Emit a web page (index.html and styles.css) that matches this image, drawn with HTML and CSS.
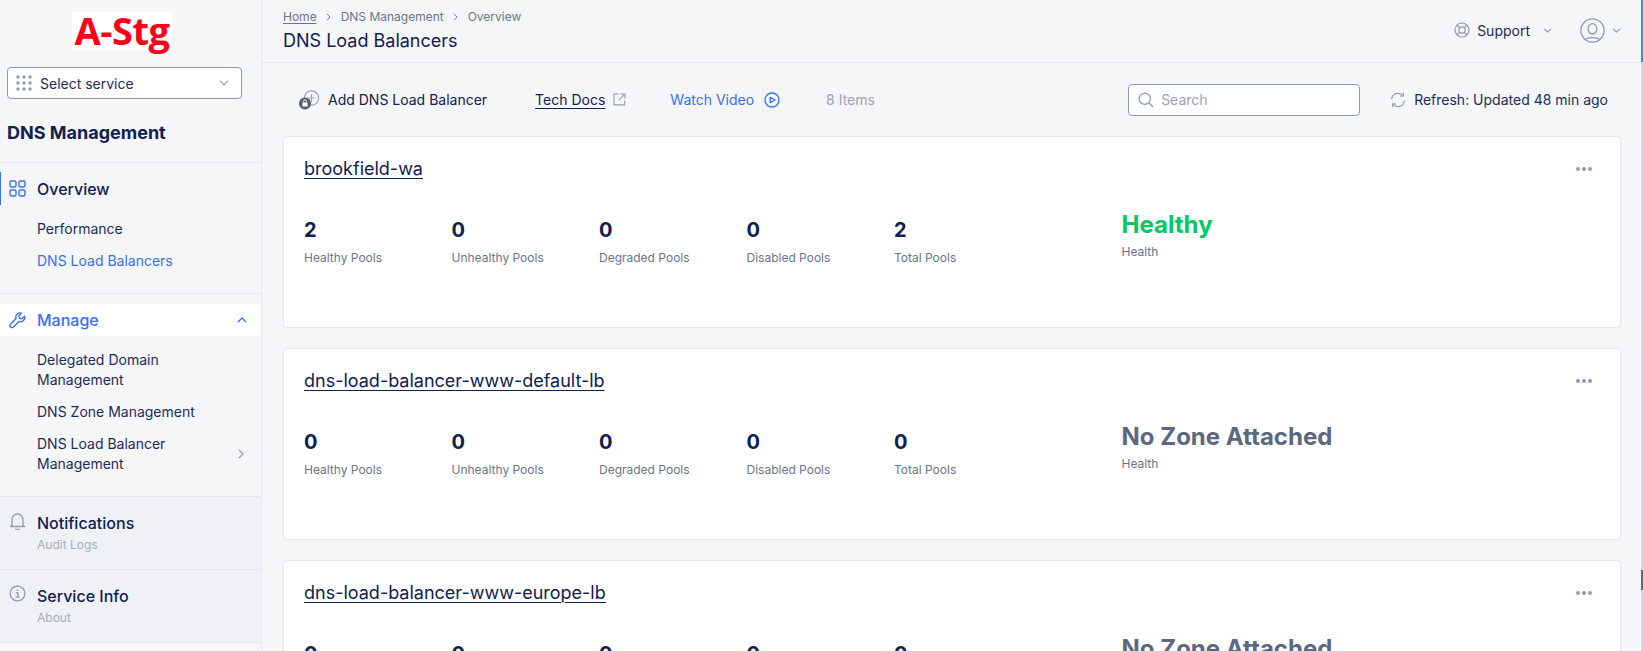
FILE: index.html
```html
<!DOCTYPE html>
<html lang="en">
<head>
<meta charset="utf-8">
<title>DNS Load Balancers</title>
<link rel="stylesheet" href="styles.css">
</head>
<body>
<aside class="sidebar">
  <div class="logo-row"><span class="logo">A-Stg</span></div>
  <div class="select">
    <svg class="select-grip" width="16" height="16" viewBox="0 0 16 16" fill="#8e99b2"><circle cx="2" cy="2" r="1.7"/><circle cx="8" cy="2" r="1.7"/><circle cx="14" cy="2" r="1.7"/><circle cx="2" cy="8" r="1.7"/><circle cx="8" cy="8" r="1.7"/><circle cx="14" cy="8" r="1.7"/><circle cx="2" cy="14" r="1.7"/><circle cx="8" cy="14" r="1.7"/><circle cx="14" cy="14" r="1.7"/></svg>
    <span class="select-text">Select service</span>
    <svg width="10" height="6" viewBox="0 0 10 6" fill="none" stroke="#8e99b2" stroke-width="1.2"><path d="M1 1l4 4 4-4"/></svg>
  </div>
  <div class="app-title">DNS Management</div>

  <nav class="group group-overview">
    <div class="nav-head active-bar">
      <svg width="17" height="17" viewBox="0 0 17 17" fill="none" stroke="#3a6ff0" stroke-width="1.4"><rect x="1" y="1" width="6" height="6" rx="1.4"/><rect x="10" y="1" width="6" height="6" rx="1.4"/><rect x="1" y="10" width="6" height="6" rx="1.4"/><rect x="10" y="10" width="6" height="6" rx="1.4"/></svg>
      <span class="nav-title">Overview</span>
    </div>
    <a class="sub">Performance</a>
    <a class="sub sub-active">DNS Load Balancers</a>
  </nav>

  <nav class="group group-manage">
    <div class="nav-head nav-open">
      <svg width="17" height="17" viewBox="0 0 17 17" fill="none" stroke="#3a6ff0" stroke-width="1.4" stroke-linejoin="round"><path d="M15.6 4.2l-2.8 2.6-2.4-.5-.6-2.4L12.5 1.2a4.2 4.2 0 0 0-5.4 5.4L1.5 12.2a1.9 1.9 0 0 0 2.9 2.9l5.7-5.7a4.2 4.2 0 0 0 5.5-5.2z"/></svg>
      <span class="nav-title nav-title-blue">Manage</span>
      <svg class="nav-chevron" width="10" height="6" viewBox="0 0 10 6" fill="none" stroke="#3a6ff0" stroke-width="1.3"><path d="M1 5l4-4 4 4"/></svg>
    </div>
    <a class="sub sub-wrap">Delegated Domain<br>Management</a>
    <a class="sub sub-wrap">DNS Zone Management</a>
    <a class="sub sub-wrap sub-more"><span>DNS Load Balancer<br>Management</span>
      <svg width="6" height="10" viewBox="0 0 6 10" fill="none" stroke="#8e99b2" stroke-width="1.2"><path d="M1 1l4 4-4 4"/></svg></a>
  </nav>

  <div class="footer-item">
    <svg width="17" height="18" viewBox="0 0 17 18" fill="none" stroke="#8e99b2" stroke-width="1.3"><path d="M3 13V7.5a5.5 5.5 0 0 1 11 0V13l1.5 1.5h-14z" stroke-linejoin="round"/><path d="M6.5 16.5a2.2 2.2 0 0 0 4 0"/></svg>
    <div><div class="footer-title">Notifications</div><div class="footer-sub">Audit Logs</div></div>
  </div>
  <div class="footer-item">
    <svg width="17" height="17" viewBox="0 0 17 17" fill="none" stroke="#8e99b2" stroke-width="1.3"><circle cx="8.5" cy="8.5" r="7.4"/><path d="M6.8 7.6h2v4.4M6.6 12.2h4.2"/><path d="M8.4 4.6v1.4" stroke-width="1.6"/></svg>
    <div><div class="footer-title">Service Info</div><div class="footer-sub">About</div></div>
  </div>
</aside>

<main class="main">
  <header class="topbar">
    <div class="top-left">
      <div class="crumbs"><a class="crumb-home">Home</a><svg width="5" height="8" viewBox="0 0 5 8" fill="none" stroke="#7a8499" stroke-width="1"><path d="M1 .8L4 4 1 7.2"/></svg><span>DNS Management</span><svg width="5" height="8" viewBox="0 0 5 8" fill="none" stroke="#7a8499" stroke-width="1"><path d="M1 .8L4 4 1 7.2"/></svg><span>Overview</span></div>
      <h1 class="page-title">DNS Load Balancers</h1>
    </div>
    <div class="top-right">
      <svg width="16" height="16" viewBox="0 0 16 16" fill="none" stroke="#8e99b2" stroke-width="1.2"><circle cx="8" cy="8" r="7"/><circle cx="8" cy="8" r="3.2"/><path d="M3 3l2.8 2.8M13 3l-2.8 2.8M3 13l2.8-2.8M13 13l-2.8-2.8"/></svg>
      <span class="support">Support</span>
      <svg class="support-chev" width="9" height="5" viewBox="0 0 9 5" fill="none" stroke="#8e99b2" stroke-width="1.1"><path d="M.8.8L4.5 4 8.2.8"/></svg>
      <svg class="avatar" width="25" height="25" viewBox="0 0 25 25" fill="none" stroke="#8e99b2" stroke-width="1.3"><circle cx="12.5" cy="12.5" r="11.6"/><ellipse cx="12.5" cy="10.8" rx="4.4" ry="5.2"/><path d="M5.5 21.5c2-2.4 12-2.4 14 0"/></svg>
      <svg class="avatar-chev" width="9" height="5" viewBox="0 0 9 5" fill="none" stroke="#8e99b2" stroke-width="1.1"><path d="M.8.8L4.5 4 8.2.8"/></svg>
    </div>
  </header>

  <div class="toolbar">
    <div class="tool tool-add">
      <span class="add-icon">
        <svg width="21" height="20" viewBox="0 0 21 20" fill="none"><circle cx="12.5" cy="8" r="7.2" stroke="#9aa3b5" stroke-width="1.2"/><path d="M12.5 4v8M8.5 8h8" stroke="#9aa3b5" stroke-width="1.2"/><circle cx="6" cy="13.5" r="6" fill="#565f6e"/><rect x="3.4" y="12.4" width="5.2" height="4.2" rx=".6" fill="#fff"/><path d="M4.6 12.4v-1.2a1.4 1.4 0 0 1 2.8 0v1.2" stroke="#fff" stroke-width=".9"/></svg>
      </span>
      <span>Add DNS Load Balancer</span>
    </div>
    <div class="tool tool-docs">
      <a class="docs-link">Tech Docs</a>
      <svg width="13" height="13" viewBox="0 0 13 13" fill="none" stroke="#9aa3b5" stroke-width="1.2"><path d="M5.5 1.2H1v10.6h10.6V7.5M7.5 1H12v4.5M12 1L5.8 7.2"/></svg>
    </div>
    <div class="tool tool-video">
      <span>Watch Video</span>
      <svg width="16" height="16" viewBox="0 0 16 16" fill="none" stroke="#3a6ff0" stroke-width="1.3"><circle cx="8" cy="8" r="7"/><path d="M6.2 5.2L11 8l-4.8 2.8z" stroke-linejoin="round"/></svg>
    </div>
    <div class="items">8 Items</div>
    <label class="search">
      <svg width="16" height="16" viewBox="0 0 16 16" fill="none" stroke="#8e99b2" stroke-width="1.3"><circle cx="6.8" cy="6.8" r="5.6"/><path d="M11 11l4 4"/></svg>
      <span>Search</span>
    </label>
    <div class="refresh">
      <svg width="16" height="16" viewBox="0 0 16 16" fill="none" stroke="#9aa3b5" stroke-width="1.3"><path d="M1.6 7.2A6.4 6.4 0 0 1 12.8 3.6M14.4 8.8A6.4 6.4 0 0 1 3.2 12.4"/><path d="M13.4.8v3.4H10M2.6 15.2v-3.4H6"/></svg>
      <span>Refresh: Updated 48 min ago</span>
    </div>
  </div>

  <section class="cards">
    <article class="card">
      <div class="card-head"><a class="card-name">brookfield-wa</a><span class="dots"><i></i><i></i><i></i></span></div>
      <div class="stats">
        <div class="stat"><b>2</b><span>Healthy Pools</span></div>
        <div class="stat"><b>0</b><span>Unhealthy Pools</span></div>
        <div class="stat"><b>0</b><span>Degraded Pools</span></div>
        <div class="stat"><b>0</b><span>Disabled Pools</span></div>
        <div class="stat"><b>2</b><span>Total Pools</span></div>
        <div class="health"><b class="ok">Healthy</b><span>Health</span></div>
      </div>
    </article>
    <article class="card">
      <div class="card-head"><a class="card-name">dns-load-balancer-www-default-lb</a><span class="dots"><i></i><i></i><i></i></span></div>
      <div class="stats">
        <div class="stat"><b>0</b><span>Healthy Pools</span></div>
        <div class="stat"><b>0</b><span>Unhealthy Pools</span></div>
        <div class="stat"><b>0</b><span>Degraded Pools</span></div>
        <div class="stat"><b>0</b><span>Disabled Pools</span></div>
        <div class="stat"><b>0</b><span>Total Pools</span></div>
        <div class="health"><b class="none">No Zone Attached</b><span>Health</span></div>
      </div>
    </article>
    <article class="card">
      <div class="card-head"><a class="card-name">dns-load-balancer-www-europe-lb</a><span class="dots"><i></i><i></i><i></i></span></div>
      <div class="stats">
        <div class="stat"><b>0</b><span>Healthy Pools</span></div>
        <div class="stat"><b>0</b><span>Unhealthy Pools</span></div>
        <div class="stat"><b>0</b><span>Degraded Pools</span></div>
        <div class="stat"><b>0</b><span>Disabled Pools</span></div>
        <div class="stat"><b>0</b><span>Total Pools</span></div>
        <div class="health"><b class="none">No Zone Attached</b><span>Health</span></div>
      </div>
    </article>
  </section>
</main>
<div class="edge-strip"></div>
</body>
</html>
```
FILE: styles.css
```css
* { box-sizing: border-box; }
html, body { height: 100%; }
body {
  margin: 0;
  display: flex;
  height: 651px;
  overflow: hidden;
  background: #f5f6f8;
  color: #10204f;
  font-family: Inter, "Liberation Sans", sans-serif;
  font-size: 14px;
}
svg { flex: none; display: block; }

/* sidebar */
.sidebar {
  width: 262px;
  flex: none;
  height: 651px;
  overflow: hidden;
  background: #f5f6f8;
  border-right: 1px solid #e4e7f1;
}
.logo-row { padding: 12px 0 0 72px; height: 67px; }
.logo {
  display: block;
  width: 100px;
  height: 39px;
  background: #fff;
  color: #ff0019;
  font-family: "Open Sans", sans-serif;
  font-weight: 700;
  font-size: 38px;
  line-height: 37px;
  text-align: center;
  letter-spacing: -0.5px;
  white-space: nowrap;
}
.select {
  margin-left: 7px;
  width: 235px;
  height: 32px;
  background: #fff;
  border: 1px solid #8e99b2;
  border-radius: 4px;
  display: flex;
  align-items: center;
  padding: 0 12px 0 8px;
}
.select-text { flex: 1; margin-left: 8px; color: #1d2c57; }
.app-title {
  padding: 21px 0 17px 7px;
  font-size: 18px;
  font-weight: 700;
  line-height: 25px;
  border-bottom: 1px solid #e4e7f1;
}
.group { display: block; border-bottom: 1px solid #e4e7f1; }
.group-overview { padding: 9px 0 16px; }
.group-manage { padding: 10px 0 16px; }
.nav-head {
  display: flex;
  align-items: center;
  height: 33px;
  padding: 0 12px 0 9px;
  gap: 11px;
}
.active-bar { border-left: 1px solid #3a6ff0; padding-left: 8px; margin-bottom: 8px; }
.nav-open { background: #fff; height: 32px; margin-bottom: 8px; }
.nav-title { font-size: 16px; font-weight: 500; color: #10204f; }
.nav-title-blue { color: #3a6ff0; flex: 1; }
.nav-chevron { margin-right: 2px; }
.sub {
  display: block;
  padding: 0 16px 0 37px;
  height: 32px;
  line-height: 32px;
  color: #1d2c57;
}
.sub-active { color: #3a6ff0; }
.sub-wrap { height: auto; line-height: 20px; padding-top: 5.5px; padding-bottom: 5.5px; margin-bottom: 1px; }
.sub-more { display: flex; align-items: center; justify-content: space-between; padding-right: 17px; }
.footer-item {
  background: #f0f1f7;
  height: 73px;
  border-bottom: 1px solid #e4e7f1;
  display: flex;
  align-items: flex-start;
  gap: 11px;
  padding: 15px 0 0 9px;
}
.footer-title { font-size: 16px; font-weight: 500; line-height: 22px; }
.footer-sub { font-size: 12px; line-height: 18px; margin-top: 2px; color: #a4adc0; }

/* main */
.main { flex: 1; min-width: 0; height: 651px; overflow: hidden; }
.topbar {
  height: 63px;
  border-bottom: 1px solid #e4e7f1;
  display: flex;
  justify-content: space-between;
  padding: 0 0 0 21px;
}
.top-left { padding-top: 9px; }
.crumbs { display: flex; align-items: center; gap: 9.5px; font-size: 12px; line-height: 16px; color: #6b7589; }
.crumb-home { text-decoration: underline; text-underline-offset: 2px; }
.page-title { margin: 4px 0 0; font-size: 18px; font-weight: 400; line-height: 24px; color: #10204f; }
.top-right { display: flex; align-items: center; padding: 0 22px 2px 0; height: 62px; }
.support { margin-left: 7px; color: #1d2c57; }
.support-chev { margin-left: 13px; }
.avatar { margin-left: 28px; }
.avatar-chev { margin-left: 7px; }

.toolbar {
  height: 73px;
  display: flex;
  align-items: center;
  padding: 0 35px 0 0;
}
.tool { display: flex; align-items: center; color: #10204f; }
.tool-add { margin-left: 37px; gap: 8px; }
.tool-docs { margin-left: 48px; gap: 8px; }
.docs-link { text-decoration: underline; text-underline-offset: 3px; }
.tool-video { margin-left: 44px; gap: 10px; color: #3a6ff0; }
.items { margin-left: 46px; color: #9aa3b5; flex: 1; }
.search {
  width: 232px;
  height: 32px;
  border: 1px solid #8e99b2;
  border-radius: 4px;
  background: #fff;
  display: flex;
  align-items: center;
  gap: 7px;
  padding-left: 9px;
  color: #9aa3b5;
}
.refresh { margin-left: 30px; display: flex; align-items: center; gap: 8px; color: #1d2c57; }

.cards { padding: 0 22px 0 21px; display: flex; flex-direction: column; gap: 20px; }
.card {
  background: #fff;
  border: 1px solid #e4e7f1;
  border-radius: 4px;
  height: 192px;
  padding: 19px 20px 0;
  flex: none;
}
.card-head { display: flex; align-items: center; justify-content: space-between; height: 26px; }
.card-name { font-size: 18px; line-height: 26px; text-decoration: underline; text-underline-offset: 3px; text-decoration-thickness: 1px; }
.dots { display: flex; gap: 2px; padding-right: 8px; }
.dots i { width: 4px; height: 4px; border-radius: 50%; background: #8e99b2; display: block; }
.stats { display: flex; align-items: flex-start; margin-top: 34px; }
.stat { width: 147.5px; flex: none; }
.stat b { display: block; font-size: 20px; font-weight: 700; line-height: 28px; letter-spacing: .3px; }
.stat span { display: block; font-size: 12px; line-height: 18px; margin-top: 5px; color: #6b7589; }
.health { margin-left: 80px; margin-top: -6px; }
.health b { display: block; font-size: 24px; font-weight: 700; line-height: 30px; }
.health span { display: block; font-size: 12px; line-height: 18px; margin-top: 3px; color: #6b7589; }
.ok { color: #00c864; }
.none { color: #5b6880; }

.edge-strip {
  position: fixed;
  top: 0;
  right: 0;
  width: 2px;
  height: 651px;
  background: linear-gradient(#3a8fc0 0, #3a8fc0 62px, #d5d7db 62px, #d5d7db 570px, #666a70 570px, #666a70 590px, #d5d7db 590px);
}
```
